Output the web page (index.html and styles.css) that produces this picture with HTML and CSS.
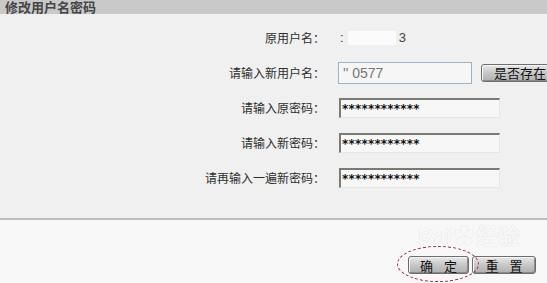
FILE: index.html
```html
<!DOCTYPE html>
<html lang="zh-CN">
<head>
<meta charset="UTF-8">
<title>修改用户名密码</title>
<link rel="stylesheet" href="styles.css">
</head>
<body>
<div class="panel">
  <div class="panel-title">修改用户名密码</div>
  <form class="account-form">
    <div class="row">
      <label class="label">原用户名：</label>
      <div class="field"><span class="old-name">:<span class="mask"></span>3</span></div>
    </div>
    <div class="row">
      <label class="label">请输入新用户名：</label>
      <div class="field">
        <span class="text-box">'' 0577</span>
        <button type="button" class="btn btn-check">是否存在</button>
      </div>
    </div>
    <div class="row">
      <label class="label">请输入原密码：</label>
      <div class="field"><span class="pwd-box">************</span></div>
    </div>
    <div class="row">
      <label class="label">请输入新密码：</label>
      <div class="field"><span class="pwd-box">************</span></div>
    </div>
    <div class="row">
      <label class="label">请再输入一遍新密码：</label>
      <div class="field"><span class="pwd-box">************</span></div>
    </div>
  </form>
  <div class="actions">
    <button type="button" class="btn btn-ok">确 定</button>
    <button type="button" class="btn btn-reset">重 置</button>
    <span class="circle"></span>
    <span class="watermark">Bai<span class="paw">✿</span>经验</span>
  </div>
</div>
</body>
</html>
```

FILE: styles.css
```css
body {
  margin: 0;
  background: #f8f8f8;
  font-family: "Noto Sans CJK SC", "DejaVu Sans", sans-serif;
  font-size: 12px;
  color: #333;
}

.panel {
  width: 547px;
  height: 283px;
  overflow: hidden;
}

.panel-title {
  height: 14px;
  line-height: 14px;
  padding-left: 5px;
  background: #c9c9c9;
  color: #454545;
  font-weight: bold;
  font-size: 13px;
}

.account-form {
  background: #f0f0f0;
  padding: 6px 0 23px;
  border-bottom: 2px solid #bdbdbd;
}

.row {
  display: flex;
  align-items: center;
  height: 35px;
}

.label {
  width: 325px;
  text-align: right;
  flex-shrink: 0;
  color: #2e2e2e;
}

.field {
  display: flex;
  align-items: center;
  margin-left: 13px;
}

.old-name {
  display: flex;
  align-items: center;
  font-family: "Liberation Sans", sans-serif;
  font-size: 13px;
  color: #444;
  padding-left: 2px;
}

.mask {
  display: inline-block;
  width: 48px;
  height: 14px;
  margin: 0 3px 0 4px;
  background: #fbfbfb;
}

.text-box {
  display: block;
  box-sizing: border-box;
  width: 134px;
  height: 22px;
  line-height: 20px;
  padding-left: 4px;
  border: 1px solid #9db3c4;
  background: #f6f6f6;
  color: #777;
  font-family: "Liberation Sans", sans-serif;
  font-size: 14px;
}

.pwd-box {
  display: block;
  box-sizing: border-box;
  width: 161px;
  height: 20px;
  line-height: 18px;
  padding-left: 1px;
  margin-left: 1px;
  border-top: 2px solid #7b7b76;
  border-left: 2px solid #7b7b76;
  border-right: 1px solid #e6e6e6;
  border-bottom: 1px solid #e6e6e6;
  background: #f7f7f7;
  color: #111;
  font-family: "DejaVu Sans", sans-serif;
  font-weight: bold;
  font-size: 12px;
  letter-spacing: 0.2px;
}

.btn {
  box-sizing: border-box;
  height: 18px;
  padding: 0;
  border: 1px solid #6e6e6e;
  border-radius: 3px;
  background: linear-gradient(#e8e8e8, #c4c4c4 55%, #b0b0b0);
  box-shadow: inset 1px 1px 0 #f6f6f6, inset -1px -1px 0 #8a8a8a;
  color: #111;
  font-family: "Noto Sans CJK SC", sans-serif;
  font-size: 13px;
  line-height: 15px;
  white-space: nowrap;
}

.btn-check {
  width: 72px;
  margin-left: 9px;
  text-align: right;
  padding-right: 6px;
}

.actions {
  position: relative;
  display: flex;
  justify-content: flex-end;
  gap: 3px;
  padding: 36px 11px 0 0;
}

.btn-ok,
.btn-reset {
  word-spacing: 8px;
}

.btn-ok {
  width: 61px;
}

.btn-reset {
  width: 64px;
}

.circle {
  position: absolute;
  left: 397px;
  top: 26px;
  width: 80px;
  height: 34px;
  border: 1px dashed #9c2a3c;
  border-radius: 50%;
}

.watermark {
  position: absolute;
  left: 418px;
  top: 5px;
  line-height: 24px;
  font-family: "Liberation Sans", sans-serif;
  font-size: 22px;
  font-weight: bold;
  color: rgba(255, 255, 255, 0.85);
  text-shadow: 0 0 1px #d0d0d0;
}

.paw {
  font-size: 20px;
  margin: 0 2px;
}
```
